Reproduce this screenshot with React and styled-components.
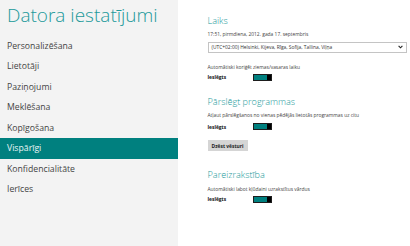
import styled, { createGlobalStyle } from "styled-components";

const GlobalStyle = createGlobalStyle`
  html, body {
    margin: 0;
    padding: 0;
    background: #ffffff;
  }
  body {
    font-family: "Open Sans", "Liberation Sans", sans-serif;
  }
`;

const Page = styled.div`
  display: flex;
  width: 410px;
  height: 246px;
  overflow: hidden;
`;

const Sidebar = styled.div`
  width: 178px;
  flex-shrink: 0;
  background: #f3f3f3;
  display: flex;
  flex-direction: column;
  padding-top: 2.3px;
  box-sizing: border-box;
`;

const AppTitle = styled.h1`
  margin: 0 0 7.5px 7px;
  height: 26px;
  line-height: 26px;
  font-size: 19px;
  font-weight: 300;
  color: #21999a;
  white-space: nowrap;
`;

const MenuItem = styled.div`
  height: 20.5px;
  line-height: 20.5px;
  padding-left: 7px;
  font-size: 8.7px;
  color: ${(p) => (p.$active ? "#eaf6f6" : "#444")};
  background: ${(p) => (p.$active ? "#00807f" : "transparent")};
`;

const Content = styled.div`
  flex: 1;
  padding: 14.8px 3px 0 29.5px;
  display: flex;
  flex-direction: column;
`;

const SectionTitle = styled.h2`
  margin: ${(p) => p.$top}px 0 0;
  height: 12px;
  line-height: 12px;
  font-size: 9.1px;
  font-weight: 300;
  color: #21999a;
  white-space: nowrap;
`;

const Small = styled.div`
  height: 7px;
  line-height: 7px;
  font-size: 4.9px;
  color: #444;
  margin-top: ${(p) => p.$top || 0}px;
  white-space: nowrap;
`;

const Select = styled.div`
  margin-top: 3.8px;
  height: 11px;
  border: 1px solid #c4c4c4;
  box-sizing: border-box;
  display: flex;
  align-items: center;
  justify-content: space-between;
  padding: 0 3px 0 3px;
  font-size: 4.9px;
  color: #333;
  white-space: nowrap;
`;

const Row = styled.div`
  display: flex;
  align-items: center;
  height: 7px;
  margin-top: ${(p) => p.$top || 0}px;
`;

const State = styled.span`
  width: 45px;
  font-size: 4.9px;
  font-weight: 700;
  color: #111;
`;

const Toggle = styled.span`
  display: flex;
  width: 19px;
  height: 7px;
  background: #00807f;
  border: 1px solid #1d1d1d;
  box-sizing: border-box;
  justify-content: flex-end;
`;

const Thumb = styled.span`
  width: 4px;
  height: 100%;
  background: #000;
`;

const Button = styled.div`
  margin-top: 10px;
  width: 40px;
  height: 11px;
  background: #d5d5d5;
  display: flex;
  align-items: center;
  justify-content: center;
  font-size: 4.9px;
  font-weight: 700;
  color: #222;
  white-space: nowrap;
`;

const menu = [
  "Personalizēšana",
  "Lietotāji",
  "Paziņojumi",
  "Meklēšana",
  "Kopīgošana",
  "Vispārīgi",
  "Konfidencialitāte",
  "Ierīces",
];

const Switch = ({ top }) => (
  <Row $top={top}>
    <State>Ieslēgts</State>
    <Toggle>
      <Thumb />
    </Toggle>
  </Row>
);

export default function App() {
  return (
    <Page>
      <GlobalStyle />
      <Sidebar>
        <AppTitle>Datora iestatījumi</AppTitle>
        {menu.map((m) => (
          <MenuItem key={m} $active={m === "Vispārīgi"}>
            {m}
          </MenuItem>
        ))}
      </Sidebar>
      <Content>
        <SectionTitle $top={0}>Laiks</SectionTitle>
        <Small $top={4.4}>17:51, pirmdiena, 2012. gada 17. septembris</Small>
        <Select>
          <span>(UTC+02:00) Helsinki, Kijeva, Rīga, Sofija, Tallina, Viļņa</span>
          <svg width="5" height="4" viewBox="0 0 5 4">
            <path d="M0.6 0.8 L2.5 2.8 L4.4 0.8" fill="none" stroke="#222" strokeWidth="1.1" />
          </svg>
        </Select>
        <Small $top={10.8}>Automātiski koriģēt ziemas/vasaras laiku</Small>
        <Switch top={3.2} />
        <SectionTitle $top={15.3}>Pārslēgt programmas</SectionTitle>
        <Small $top={4.2}>Atļaut pārslēgšanos no vienas pēdējās lietotās programmas uz citu</Small>
        <Switch top={4} />
        <Button>Dzēst vēsturi</Button>
        <SectionTitle $top={17.3}>Pareizrakstība</SectionTitle>
        <Small $top={5}>Automātiski labot kļūdaini uzrakstītus vārdus</Small>
        <Switch top={3} />
      </Content>
    </Page>
  );
}
